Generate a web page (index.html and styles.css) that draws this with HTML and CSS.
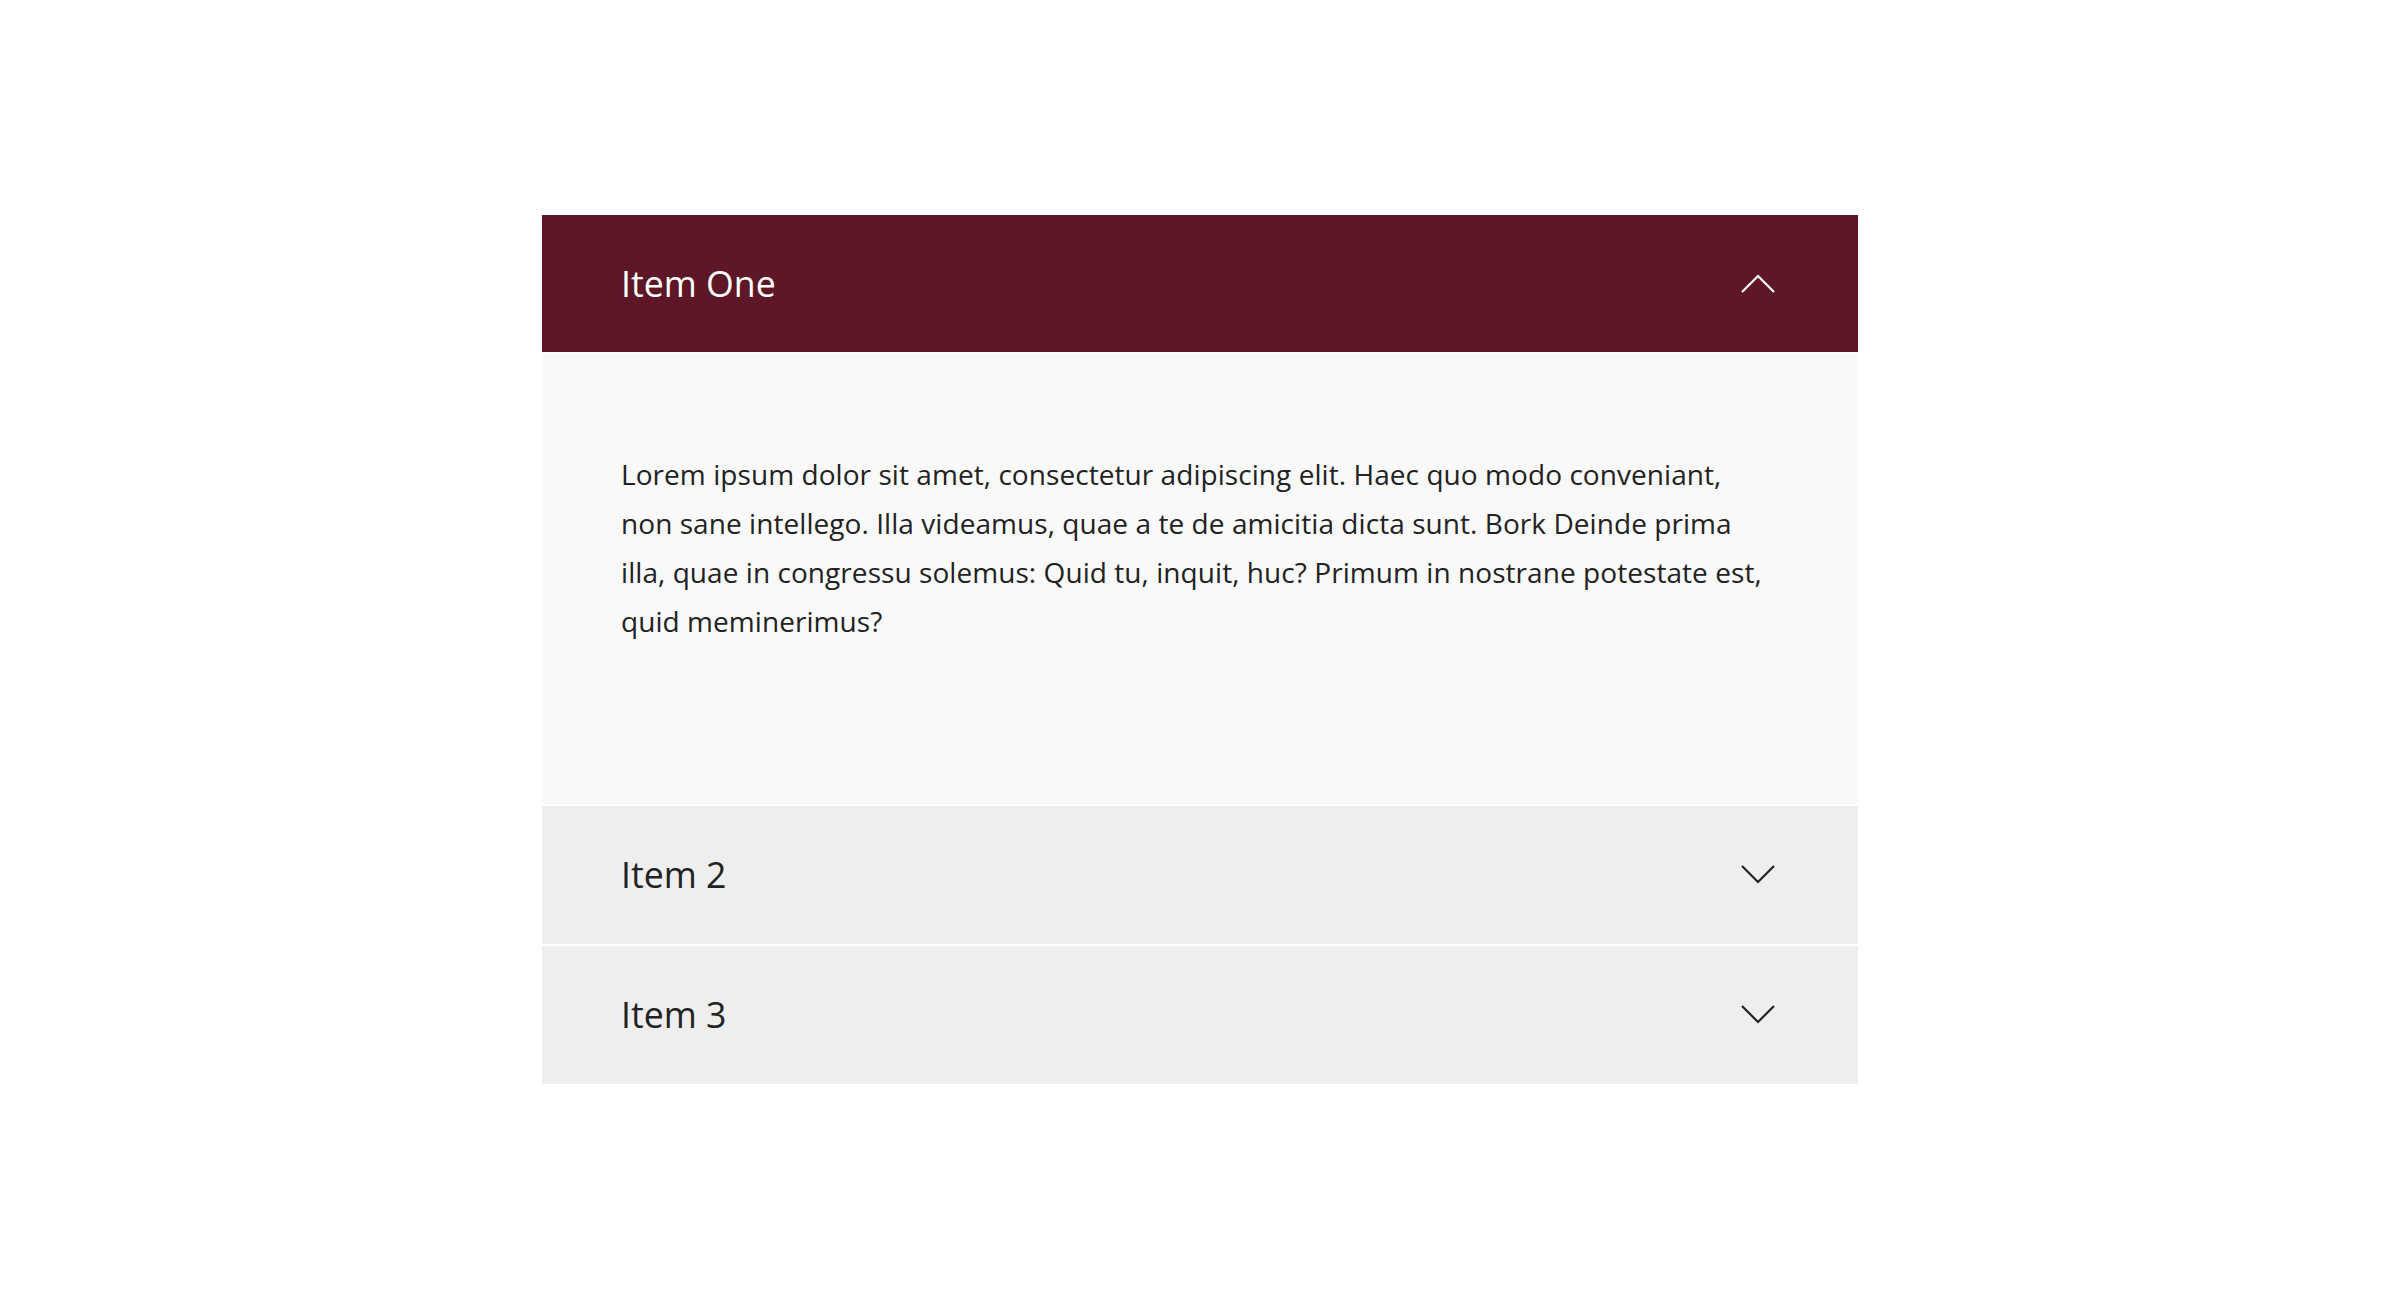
FILE: index.html
```html
<!DOCTYPE html>
<html lang="en">
<head>
<meta charset="utf-8">
<title>Accordion</title>
<link rel="stylesheet" href="styles.css">
</head>
<body>
<div class="accordion">
  <div class="item open">
    <div class="head">
      <span class="title">Item One</span>
      <svg class="chev" width="34" height="19" viewBox="0 0 34 19"><polyline points="1,18 17,2 33,18" fill="none" stroke="#ffffff" stroke-width="2.2"/></svg>
    </div>
    <div class="panel">
      <p>Lorem ipsum dolor sit amet, consectetur adipiscing elit. Haec quo modo conveniant, non sane intellego. Illa videamus, quae a te de amicitia dicta sunt. Bork Deinde prima illa, quae in congressu solemus: Quid tu, inquit, huc? Primum in nostrane potestate est, quid meminerimus?</p>
    </div>
  </div>
  <div class="item">
    <div class="head">
      <span class="title">Item 2</span>
      <svg class="chev" width="34" height="19" viewBox="0 0 34 19"><polyline points="1,1 17,17 33,1" fill="none" stroke="#222222" stroke-width="2.2"/></svg>
    </div>
  </div>
  <div class="item">
    <div class="head">
      <span class="title">Item 3</span>
      <svg class="chev" width="34" height="19" viewBox="0 0 34 19"><polyline points="1,1 17,17 33,1" fill="none" stroke="#222222" stroke-width="2.2"/></svg>
    </div>
  </div>
</div>
</body>
</html>
```
FILE: styles.css
```css
html, body {
  margin: 0;
  padding: 0;
  background: #ffffff;
}
body {
  font-family: "Open Sans", "Noto Sans", sans-serif;
  color: #222222;
}
.accordion {
  width: 1316px;
  margin: 215px auto 0;
  display: flex;
  flex-direction: column;
  gap: 2px;
}
.item {
  display: flex;
  flex-direction: column;
  gap: 1px;
}
.head {
  height: 137px;
  box-sizing: border-box;
  padding: 0 83px 0 79px;
  display: flex;
  align-items: center;
  justify-content: space-between;
  background: #eeeeee;
}
.item + .item .head {
  height: 138px;
  padding-bottom: 1px;
}
.title {
  font-size: 35.7px;
  line-height: 1;
  color: #222222;
}
.open .head {
  background: #5d1727;
}
.open .title {
  color: #ffffff;
}
.chev {
  display: block;
}
.panel {
  background: #f9f9f9;
  height: 451px;
  box-sizing: border-box;
  padding: 97px 80px 0 79px;
}
.panel p {
  margin: 0;
  width: 1148px;
  font-size: 28px;
  line-height: 49px;
  letter-spacing: 0.06px;
  color: #222222;
}
```
